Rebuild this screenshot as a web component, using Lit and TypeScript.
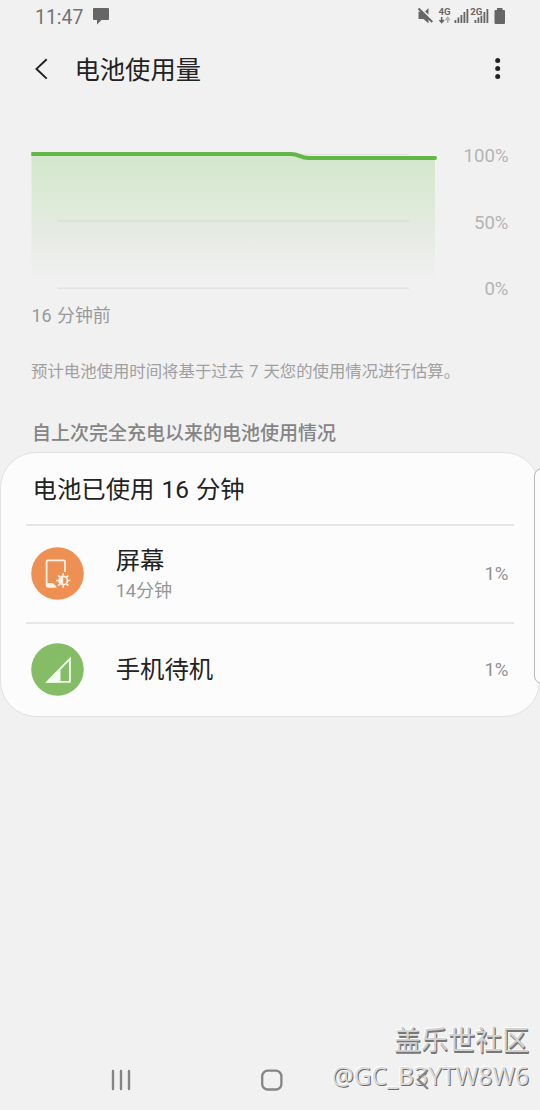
import { LitElement, html, css, svg } from "lit";
import { customElement, property } from "lit/decorators.js";

const fonts = css`Roboto, "Noto Sans CJK SC", sans-serif`;

@customElement("status-bar")
class StatusBar extends LitElement {
  static styles = css`
    :host { display: flex; justify-content: space-between; height: 34px; box-sizing: border-box; padding: 0 33px 0 35px; color: #666; font-family: ${fonts}; }
    .left { display: flex; gap: 9px; }
    .time { font-size: 19.400px; line-height: 35px; color: #737373; }
    svg { display: block; }
    .net { font: 700 9.6px/10px Roboto, sans-serif; fill: #666; }
  `;
  render() {
    const bars = (x: number) => [0, 1, 2, 3, 4].map((i) => {
      const h = [3, 5.5, 8, 11, 14][i];
      return svg`<rect x=${x + i * 3} y=${23 - h} width="1.8" height=${h} fill="#666"/>`;
    });
    return html`
      <div class="left">
        <span class="time">11:47</span>
        <svg width="18" height="34" viewBox="0 0 18 34"><path d="M2 8h14q1 0 1 1v10q0 1-1 1H9.500l-4.500 4.500V20H2q-1 0-1-1V9q0-1 1-1z" fill="#666"/></svg>
      </div>
      <svg width="90" height="34" viewBox="417 0 90 34">
        <path d="M418.500 11.500h3.500l6.500 6v5.500h-0.500L423.500 19h-5z M425 11.500l3.500-3.500v6.500z" fill="#666"/>
        <path d="M418.500 8.500l13.800 13.500" stroke="#666" stroke-width="2.100"/>
        <text class="net" x="438.500" y="15">4G</text>
        <path d="M441.700 17v4.500M439.500 20l2.200 2.600 2.200-2.600" stroke="#666" stroke-width="1.600" fill="none"/>
        <path d="M447.700 23v-4.500M445.500 20.200l2.200-2.600 2.200 2.600" stroke="#b0b0b0" stroke-width="1.600" fill="none"/>
        ${bars(454.5)} ${bars(474.5)}
        <rect x="470" y="7" width="12" height="8.800" fill="#f1f1f1"/>
        <text class="net" x="470.300" y="15">2G</text>
        <path d="M497 8h5.500v2h1.500q1 0 1 1v12q0 1-1 1h-8.500q-1 0-1-1V11q0-1 1-1h1.500z" fill="#666"/>
      </svg>`;
  }
}

@customElement("title-bar")
class TitleBar extends LitElement {
  static styles = css`
    :host { display: flex; align-items: center; height: 70px; padding: 0 33px 0 34px; font-family: ${fonts}; }
    h1 { margin: 3px 0 0 24.500px; flex: 1; font-size: 25.300px; font-weight: 400; line-height: 70px; color: #222; }
    svg { display: block; }
  `;
  render() {
    return html`
      <svg width="16" height="24" viewBox="0 0 16 24"><path d="M12.700 2.200L2.500 11.900l10.200 9.700" fill="none" stroke="#222" stroke-width="2"/></svg>
      <h1>电池使用量</h1>
      <svg width="18" height="24" viewBox="0 0 18 24" fill="#222"><circle cx="8.700" cy="3.500" r="2.500"/><circle cx="8.700" cy="11.500" r="2.500"/><circle cx="8.700" cy="19.500" r="2.500"/></svg>`;
  }
}

@customElement("battery-chart")
class BatteryChart extends LitElement {
  static styles = css`
    :host { display: block; padding: 18px 31.500px 0 31px; font-family: ${fonts}; }
    .plot { display: flex; justify-content: space-between; height: 200px; }
    .scale { display: grid; grid-template-rows: repeat(3, 66.500px); line-height: 68px; text-align: right; font-size: 18.600px; color: #b4b4b4; }
    .since { margin-top: -20px; margin-left: 0.500px; font-size: 17.900px; line-height: 27px; word-spacing: 1px; color: #999; }
    svg { display: block; }
  `;
  render() {
    return html`
      <div class="plot">
        <svg width="408" height="200" viewBox="31 122 408 200">
          <defs><linearGradient id="fade" x1="0" x2="0" y1="0" y2="1">
            <stop offset="0" stop-color="#d2e7cc"/><stop offset=".45" stop-color="#e0ebdb"/><stop offset=".54" stop-color="#e3eae0"/><stop offset="1" stop-color="#f1f1f1"/>
          </linearGradient></defs>
          <path d="M31.500 154H292C300 154 300 158 308 158H435V283H31.500z" fill="url(#fade)"/>
          <path d="M57.500 154.500H409M57.500 221H409M57.500 288.200H409" stroke="#000" stroke-opacity=".055" stroke-width="1.400"/>
          <path d="M31.300 154H291C300 154 299 158 309 158H435" fill="none" stroke="#63b746" stroke-width="4"/>
          <circle cx="435" cy="158" r="2" fill="#63b746"/>
        </svg>
        <div class="scale"><span>100%</span><span>50%</span><span>0%</span></div>
      </div>
      <div class="since">16 分钟前</div>`;
  }
}

@customElement("usage-row")
class UsageRow extends LitElement {
  @property() kind = "";
  @property() name = "";
  @property() duration = "";
  @property() percent = "";
  static styles = css`
    :host { display: flex; align-items: center; padding: 0 5.500px 0 5px; font-family: ${fonts}; }
    svg { display: block; margin-right: 31.700px; }
    .text { flex: 1; }
    .name { font-size: 24.400px; line-height: 34px; padding-top: 2px; color: #222; }
    .duration { font-size: 18.100px; line-height: 26px; color: #969696; }
    .percent { font-size: 18.600px; color: #929292; padding-top: 1px; }
  `;
  render() {
    const icon = this.kind === "screen"
      ? svg`<circle cx="26.500" cy="26.500" r="26.300" fill="#ee8f53"/>
          <path d="M34 25V14.500q0-1.200-1.200-1.200H16.800q-1.200 0-1.200 1.200v24q0 1.200 1.200 1.200H25" fill="none" stroke="#fff1e4" stroke-width="1.800"/>
          <path d="M15 36h7l4 4.600h-9q-2 0-2-2z" fill="#fff1e4"/>
          <circle cx="32.200" cy="33.500" r="4.200" fill="none" stroke="#fff1e4" stroke-width="1.700"/>
          <path d="M32.200 29.300a4.200 4.200 0 0 0 0 8.400z" fill="#fff1e4"/>
          <path d="M32.200 28.800v-2.500M32.200 38.200v2.500M27.500 33.500H25M36.900 33.500h2.500M28.900 30.200l-1.800-1.800M35.500 36.800l1.800 1.800M28.900 36.800l-1.800 1.800M35.500 30.200l1.800-1.800" stroke="#fff1e4" stroke-width="1.700"/>`
      : svg`<circle cx="26.500" cy="26.500" r="26.300" fill="#85bc66"/>
          <path d="M16.300 38.900L38.900 15.900V38.900z" fill="none" stroke="#f4fbef" stroke-width="1.900"/>
          <path d="M15 39.500L29.500 25V39.500z" fill="#f4fbef"/>`;
    return html`
      <svg width="53" height="53" viewBox="0 0 53 53">${icon}</svg>
      <div class="text">
        <div class="name">${this.name}</div>
        ${this.duration ? html`<div class="duration">${this.duration}</div>` : ""}
      </div>
      <span class="percent">${this.percent}</span>`;
  }
}

@customElement("nav-bar")
class NavBar extends LitElement {
  static styles = css`
    :host { display: flex; justify-content: space-between; align-items: center; height: 60px; padding: 0 104px 0 108px; position: relative; z-index: 1; }
    svg { display: block; }
  `;
  render() {
    return html`
      <svg width="26" height="26" viewBox="108 1067 26 26"><path d="M113 1071v18M121 1071v18M129 1071v18" stroke="#858585" stroke-width="2.400" stroke-linecap="round"/></svg>
      <svg width="26" height="26" viewBox="259 1067 26 26"><rect x="262.200" y="1070.700" width="19.200" height="18.800" rx="5.600" fill="none" stroke="#858585" stroke-width="2.300"/></svg>
      <svg width="26" height="26" viewBox="410 1067 26 26"><path d="M428 1070l-10 9.700 10 9.300" fill="none" stroke="#858585" stroke-width="2.300"/></svg>`;
  }
}

@customElement("app-root")
class AppRoot extends LitElement {
  static styles = css`
    :host { display: flex; flex-direction: column; position: relative; overflow: hidden; height: 1110px; background: #f1f1f1; font-family: ${fonts}; }
    .note { margin: 29px 31px 0; font-size: 16.400px; line-height: 27px; word-spacing: 1px; color: #a0a0a0; white-space: nowrap; }
    .section { margin: 35px 32px 0; font-size: 19px; font-weight: 500; line-height: 28px; color: #858585; }
    .card { display: grid; grid-template-rows: 71px 98px 94px; box-sizing: border-box; height: 265px; margin-top: 4px; padding: 0 25px; border: 1px solid #e1e1e1; border-radius: 36px; background: #fcfcfc; }
    .total { padding-left: 6.500px; font-size: 24.400px; line-height: 73px; word-spacing: 1px; color: #222; }
    usage-row { border-top: 2px solid #e6e6e6; box-sizing: border-box; padding-bottom: 2px; }
    .spacer { flex: 1; }
    .edge { position: absolute; left: 534px; top: 468px; width: 20px; height: 214px; border: 1px solid #b9b9b9; border-radius: 8px; background: #fcfcfc; }
    .mark { position: absolute; right: 11px; top: 1022px; text-align: right; white-space: nowrap; }
    .community { font-size: 27px; line-height: 38px; color: #d2d2d2; text-shadow: 1px 1px 0 #777, 1px 2px 0 #777, -1px -1px 0 #fff; }
    .user { font-family: "Noto Sans", sans-serif; font-size: 24.500px; line-height: 32px; color: #dadada; text-shadow: 1px 1px 0 #6c6c6c, -1px -1px 0 #fff; }
  `;
  render() {
    return html`
      <status-bar></status-bar>
      <title-bar></title-bar>
      <battery-chart></battery-chart>
      <div class="note">预计电池使用时间将基于过去 7 天您的使用情况进行估算。</div>
      <div class="section">自上次完全充电以来的电池使用情况</div>
      <div class="card">
        <div class="total">电池已使用 16 分钟</div>
        <usage-row kind="screen" name="屏幕" duration="14分钟" percent="1%"></usage-row>
        <usage-row kind="standby" name="手机待机" percent="1%"></usage-row>
      </div>
      <div class="spacer"></div>
      <nav-bar></nav-bar>
      <div class="edge"></div>
      <div class="mark"><div class="community">盖乐世社区</div><div class="user">@GC_B3YTW8W6</div></div>`;
  }
}
